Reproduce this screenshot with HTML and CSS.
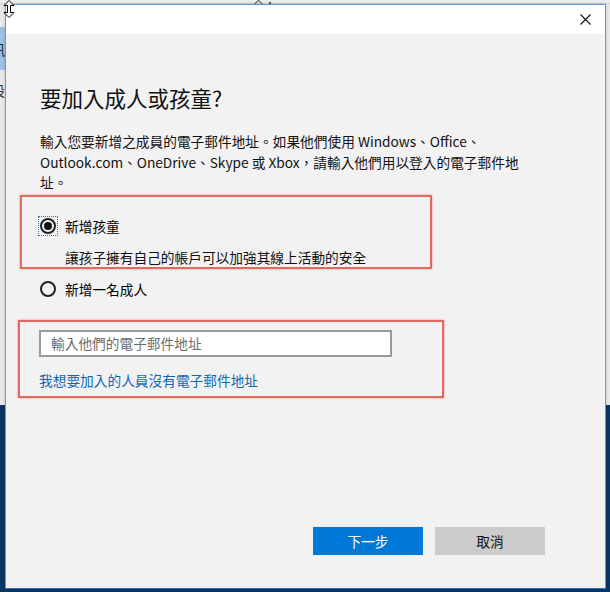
FILE: index.html
```html
<!DOCTYPE html>
<html lang="zh-Hant">
<head>
<meta charset="utf-8">
<title>要加入成人或孩童?</title>
<link rel="stylesheet" href="styles.css">
</head>
<body>
<div class="desktop">
  <div class="settings-win">
    <div class="topstrip"><span class="caret"></span><span class="dot"></span></div>
    <div class="side">
      <div class="side-item"></div>
      <div class="side-sel"><span>訊</span></div>
      <div class="side-item"><span>設</span></div>
    </div>
  </div>

  <div class="dialog">
    <div class="titlebar">
      <button class="close" aria-label="關閉">
        <svg width="11" height="11" viewBox="0 0 11 11"><path d="M0.5 0.5 L10.5 10.5 M10.5 0.5 L0.5 10.5" stroke="#111" stroke-width="1.1" fill="none"/></svg>
      </button>
    </div>
    <div class="content">
      <h1 class="title">要加入成人或孩童?</h1>
      <p class="intro">輸入您要新增之成員的電子郵件地址。如果他們使用 Windows、Office、Outlook.com、OneDrive、Skype 或 Xbox，請輸入他們用以登入的電子郵件地址。</p>

      <div class="mark mark-child">
        <label class="radio-row">
          <span class="focus"><span class="radio checked"></span></span>
          <span>新增孩童</span>
        </label>
        <div class="desc">讓孩子擁有自己的帳戶可以加強其線上活動的安全</div>
      </div>

      <label class="radio-row adult">
        <span class="focus nofocus"><span class="radio"></span></span>
        <span>新增一名成人</span>
      </label>

      <div class="mark mark-email">
        <div class="input">輸入他們的電子郵件地址</div>
        <a class="link" href="#">我想要加入的人員沒有電子郵件地址</a>
      </div>

      <div class="spacer"></div>

      <div class="buttons">
        <button class="btn primary">下一步</button>
        <button class="btn secondary">取消</button>
      </div>
    </div>
  </div>

  <svg class="cursor" width="12" height="18" viewBox="0 0 12 18">
    <path d="M6 0.5 L11 5.5 L7.5 5.5 L7.5 12.5 L11 12.5 L6 17.5 L1 12.5 L4.5 12.5 L4.5 5.5 L1 5.5 Z" fill="#fff" stroke="#000" stroke-width="1"/>
  </svg>
</div>
</body>
</html>
```

FILE: styles.css
```css
* { box-sizing: border-box; }
html, body { margin: 0; padding: 0; }
body {
  width: 610px;
  height: 592px;
  overflow: hidden;
  font-family: "Noto Sans CJK TC", "Noto Sans", sans-serif;
  color: #000;
}
.desktop {
  position: relative;
  width: 610px;
  height: 592px;
  background: #0b3662;
  overflow: hidden;
}
.settings-win {
  position: absolute;
  left: 0;
  top: 0;
  width: 610px;
  height: 405px;
  background: #e9e9e9;
}
.topstrip {
  height: 4px;
  background: #ededed;
  border-bottom: 1px solid #d0d0d0;
  position: relative;
}
.caret {
  position: absolute;
  left: 255px;
  top: 0;
  width: 7px;
  height: 7px;
  border-left: 1px solid #555;
  border-top: 1px solid #555;
  transform: rotate(45deg);
  transform-origin: center;
  margin-top: 1px;
}
.dot {
  position: absolute;
  left: 269px;
  top: 2px;
  width: 2px;
  height: 2px;
  background: #555;
}
.side {
  display: flex;
  flex-direction: column;
  width: 5px;
  overflow: hidden;
  font-size: 14px;
}
.side-item { height: 23px; }
.side-sel {
  height: 43px;
  background: #9ec2e6;
  display: flex;
  align-items: center;
  color: #222;
}
.side-sel span, .side-item span {
  margin-left: -9px;
  white-space: nowrap;
}
.side-item:last-child {
  height: 40px;
  display: flex;
  align-items: center;
  color: #333;
}

.dialog {
  position: absolute;
  left: 5px;
  top: 4px;
  width: 601px;
  height: 585px;
  border: 1px solid #5b9bd8;
  border-bottom-color: #2f6db3;
  background: #f2f2f2;
  display: flex;
  flex-direction: column;
  box-shadow: 0 0 4px rgba(0,0,0,0.15);
}
.titlebar {
  height: 29px;
  background: #fff;
  display: flex;
  justify-content: flex-end;
  align-items: center;
  flex: none;
}
.close {
  width: 40px;
  height: 29px;
  border: 0;
  background: transparent;
  display: flex;
  align-items: center;
  justify-content: center;
  padding: 0;
}
.content {
  flex: 1;
  display: flex;
  flex-direction: column;
  padding: 0 0 33px 34px;
  font-size: 13.7px;
}
.title {
  margin: 49px 0 0 0;
  font-size: 21.5px;
  line-height: 30px;
  font-weight: 400;
  color: #111;
}
.intro {
  margin: 18px 0 0 0;
  width: 490px;
  line-height: 20.5px;
  color: #111;
}
.mark {
  border: 2px solid #e06a62;
  box-shadow: 0 0 2px rgba(224,106,98,0.7);
}
.mark-child {
  margin: 2px 0 0 -20px;
  width: 412px;
  padding: 19px 0 0 18px;
  height: 74px;
}
.radio-row {
  display: flex;
  align-items: center;
  height: 20px;
  gap: 7px;
}
.focus {
  width: 20px;
  height: 20px;
  display: flex;
  align-items: center;
  justify-content: center;
  border: 1px dotted #3a6fb0;
  margin-left: -2px;
}
.focus.nofocus { border-color: transparent; }
.radio {
  width: 16px;
  height: 16px;
  border-radius: 50%;
  border: 2px solid #222;
  display: flex;
  align-items: center;
  justify-content: center;
}
.radio.checked::after {
  content: "";
  width: 8px;
  height: 8px;
  border-radius: 50%;
  background: #111;
}
.desc {
  margin: 11px 0 0 25px;
  line-height: 20px;
  color: #111;
}
.adult { margin-top: 10px; }
.mark-email {
  margin: 21px 0 0 -22px;
  width: 426px;
  height: 78px;
  padding: 8px 0 0 19px;
}
.input {
  width: 353px;
  height: 27px;
  border: 2px solid #9a9a9a;
  background: #fff;
  color: #6b6b6b;
  padding: 0 0 0 10px;
  line-height: 23px;
}
.link {
  display: block;
  margin-top: 13px;
  line-height: 20px;
  color: #0f67b5;
  text-decoration: none;
}
.spacer { flex: 1; }
.buttons {
  display: flex;
  justify-content: flex-end;
  gap: 12px;
  padding-right: 60px;
}
.btn {
  width: 110px;
  height: 28px;
  border: 0;
  font-family: inherit;
  font-size: 13.7px;
  padding: 0;
}
.primary { background: #0078d7; color: #fff; }
.secondary { background: #cccccc; color: #111; }

.cursor {
  position: absolute;
  left: 3px;
  top: 0;
}
```
